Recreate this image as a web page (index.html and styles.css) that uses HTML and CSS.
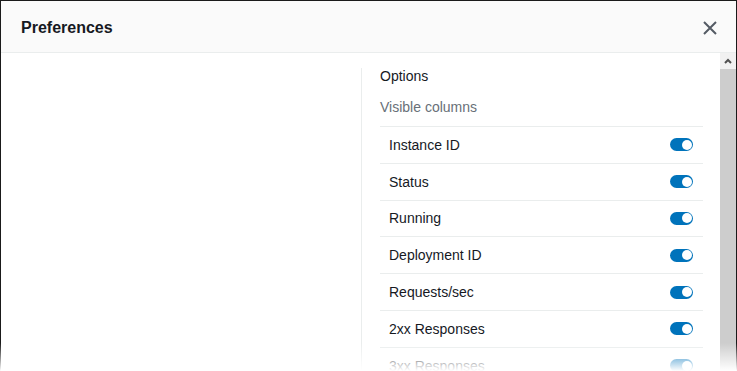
FILE: index.html
```html
<!DOCTYPE html>
<html lang="en">

<head>
    <meta charset="UTF-8">
    <meta name="viewport" content="width=device-width, initial-scale=1.0">
    <title>Preferences</title>
    <link rel="stylesheet" href="styles.css">
</head>

<body>
    <div class="modal">
        <!-- header -->
        <div class="modal-header">
            <h2>Preferences</h2>
            <button class="close-btn" aria-label="Close">
                <svg width="14" height="14" viewBox="0 0 14 14">
                    <path d="M1 1 L13 13 M13 1 L1 13" stroke="#545b64" stroke-width="2" fill="none" />
                </svg>
            </button>
        </div>
        <div class="modal-body">
            <div class="content">
                <div class="left-pane"></div>
                <div class="right-pane">
                    <div class="pane-title">Options</div>
                    <div class="group-label">Visible columns</div>
                    <ul class="column-list">
                        <li><span>Instance ID</span><span class="toggle"></span></li>
                        <li><span>Status</span><span class="toggle"></span></li>
                        <li><span>Running</span><span class="toggle"></span></li>
                        <li><span>Deployment ID</span><span class="toggle"></span></li>
                        <li><span>Requests/sec</span><span class="toggle"></span></li>
                        <li><span>2xx Responses</span><span class="toggle"></span></li>
                        <li><span>3xx Responses</span><span class="toggle"></span></li>
                        <li><span>4xx Responses</span><span class="toggle"></span></li>
                    </ul>
                </div>
            </div>
            <!-- scrollbar -->
            <div class="scrollbar">
                <div class="scroll-up">
                    <svg width="8" height="6" viewBox="0 0 8 6">
                        <path d="M1 5 L4 2 L7 5" stroke="#505050" stroke-width="2" fill="none" />
                    </svg>
                </div>
                <div class="scroll-thumb"></div>
            </div>
        </div>
    </div>
    <div class="fade"></div>
</body>

</html>
```

FILE: styles.css
```css
html,
body {
    margin: 0;
    height: 100%;
    overflow: hidden;
}

body {
    font-family: 'Liberation Sans', Arial, sans-serif;
    color: #16191f;
    background-color: #fff;
    position: relative;
}

.modal {
    box-sizing: border-box;
    height: 371px;
    border: 1px solid #1a1a1a;
    border-bottom: none;
    display: flex;
    flex-direction: column;
}

.modal-header {
    box-sizing: border-box;
    height: 52px;
    flex-shrink: 0;
    background-color: #fafafa;
    border-bottom: 1px solid #eaeded;
    display: flex;
    align-items: center;
    justify-content: space-between;
    padding: 2px 19px 0 20px;
}

.modal-header h2 {
    margin: 0;
    font-size: 16px;
    font-weight: bold;
    line-height: 20px;
}

.close-btn {
    border: none;
    background: none;
    padding: 0;
    width: 14px;
    height: 14px;
    display: flex;
}

.modal-body {
    flex: 1;
    display: flex;
    overflow: hidden;
}

.content {
    flex: 1;
    display: flex;
}

.left-pane {
    width: 360px;
    flex-shrink: 0;
}

.right-pane {
    flex: 1;
    margin-top: 15px;
    border-left: 1px solid #eaeded;
    padding: 0 17px 0 18px;
}

.pane-title {
    font-size: 14px;
    line-height: 16px;
}

.group-label {
    font-size: 14px;
    line-height: 16px;
    color: #687078;
    margin-top: 15px;
    margin-bottom: 11px;
}

.column-list {
    list-style: none;
    margin: 0;
    padding: 0;
}

.column-list li {
    box-sizing: border-box;
    height: 36.8px;
    border-top: 1px solid #eaeded;
    display: flex;
    align-items: center;
    justify-content: space-between;
    padding: 0 10px 0 9px;
    font-size: 14px;
}

.toggle {
    position: relative;
    width: 23px;
    height: 13px;
    border-radius: 7px;
    background-color: #0073bb;
}

.toggle::after {
    content: "";
    position: absolute;
    right: 1.5px;
    top: 1.5px;
    width: 10px;
    height: 10px;
    border-radius: 50%;
    background-color: #fff;
}

.scrollbar {
    width: 16px;
    flex-shrink: 0;
    display: flex;
    flex-direction: column;
    background-color: #f1f1f1;
}

.scroll-up {
    height: 16px;
    display: flex;
    align-items: center;
    justify-content: center;
}

.scroll-thumb {
    flex: 1;
    background-color: #cdcdcd;
}

/* bottom fade over everything */
.fade {
    position: absolute;
    left: 0;
    right: 0;
    top: 343px;
    height: 28px;
    background: linear-gradient(rgba(255, 255, 255, 0), #fff);
}
```
